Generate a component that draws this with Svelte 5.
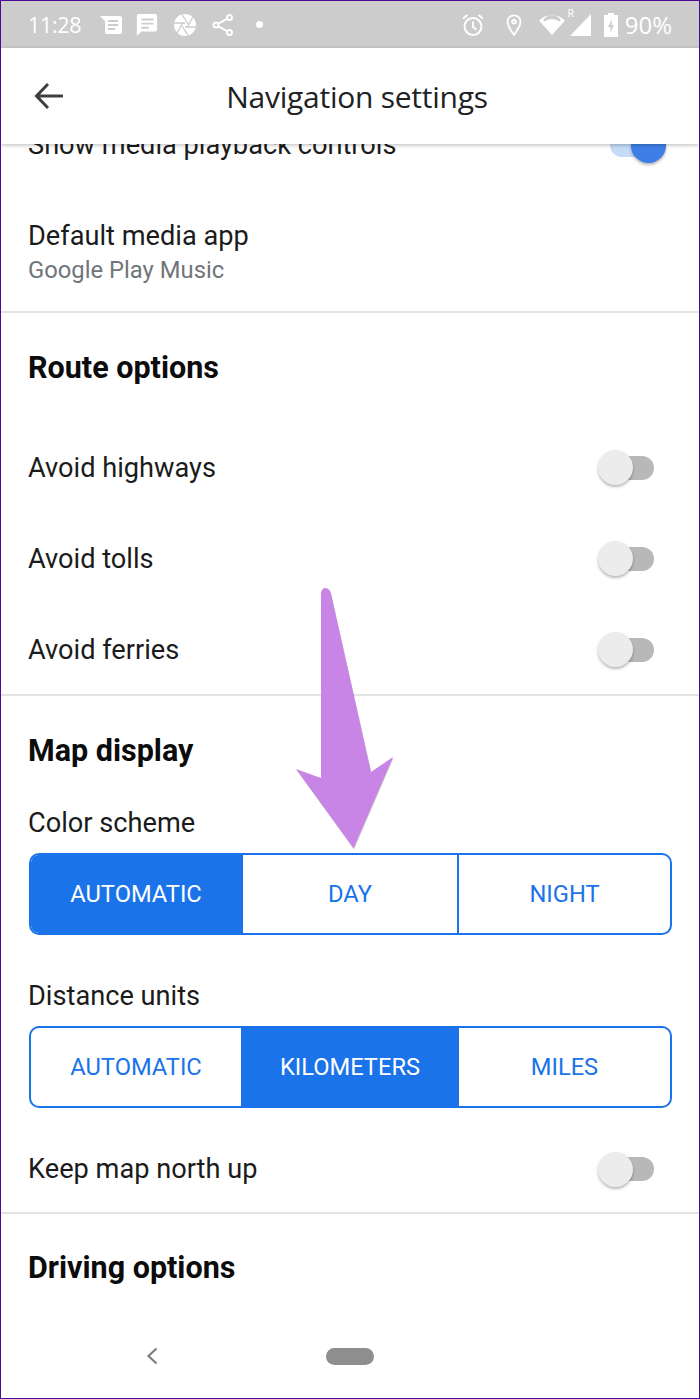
<script>
  const colorOptions = [
    { label: 'AUTOMATIC', on: true },
    { label: 'DAY', on: false },
    { label: 'NIGHT', on: false }
  ];
  const unitOptions = [
    { label: 'AUTOMATIC', on: false },
    { label: 'KILOMETERS', on: true },
    { label: 'MILES', on: false }
  ];
</script>

<div class="phone">
  <div class="status">
    <div class="status-left">
      <span class="time">11:28</span>
      <svg class="i" style="margin-left:20px" width="22" height="18" viewBox="0 0 22 18"><path fill="#fff" fill-rule="evenodd" d="M0 0h20a2 2 0 0 1 2 2v14a2 2 0 0 1-2 2H7a2 2 0 0 1-2-2V5zM8 4v2h10V4zm0 4v2h10V8zm0 4v2h7v-2z"/></svg>
      <svg class="i" style="margin-left:13px" width="24" height="24" viewBox="0 0 24 26"><path fill="#fff" fill-rule="evenodd" d="M3 1h18a2 2 0 0 1 2 2v15a2 2 0 0 1-2 2H6l-5 5V3a2 2 0 0 1 2-2zm3 5v2h13V6zm0 4.500v2h13v-2zm0 4.500v2h8v-2z"/></svg>
      <svg class="i" style="margin-left:14px" width="24" height="24" viewBox="0 0 24 24"><circle cx="12" cy="12" r="11" fill="#fff"/><path stroke="#ccc" stroke-width="1.300" fill="none" d="M9 1.500 15 11M20 4 14 14.500M23 14H12M15 22.500 9 13M4 20 10 9.500M1 10h11"/></svg>
      <svg class="i" style="margin-left:15px" width="22" height="24" viewBox="0 0 22 24" fill="none" stroke="#fff" stroke-width="2"><circle cx="17.500" cy="4.500" r="2.500"/><circle cx="4" cy="12" r="2.500"/><circle cx="17.500" cy="19.500" r="2.500"/><path d="M6 10.800 15.500 5.700M6 13.200l9.500 5.100"/></svg>
      <span class="dot"></span>
    </div>
    <div class="status-right">
      <svg class="i" width="24" height="24" viewBox="0 0 24 24" fill="none" stroke="#fff" stroke-width="2"><circle cx="12" cy="13.500" r="8.500"/><path d="M12 8.500v5.500l3.500 2.500M2 5.500 6.500 2M22 5.500 17.500 2"/></svg>
      <svg class="i" style="margin-left:19px" width="20" height="24" viewBox="0 0 20 26" fill="none" stroke="#fff" stroke-width="2"><path d="M10 23.500C6 18 3 14.500 3 9.500a7 7 0 0 1 14 0c0 5-3 8.500-7 14z"/><circle cx="10" cy="9.500" r="2"/></svg>
      <svg class="i" style="margin-left:15px" width="26" height="22" viewBox="0 0 26 22"><path fill="#fff" fill-rule="evenodd" d="M0 6.500C7-.5 19-.5 26 6.500L13 21zM5.500 7.500C10 4 16 4 20.500 7.500l1.500-1.500C16-.8 10-.3 4 6z"/></svg>
      <span class="roam">R</span>
      <svg class="i sig" width="22" height="24" viewBox="0 0 22 24"><path fill="#fff" d="M21 1v22H0z"/></svg>
      <svg class="i" style="margin-left:12px" width="14" height="24" viewBox="0 0 14 24"><path fill="#fff" fill-rule="evenodd" d="M4 0h6v2h4v22H0V2h4zM8 6 4 14h2.500L6 20l4-8H7.500z"/></svg>
      <span class="pct">90%</span>
    </div>
  </div>

  <header class="head">
    <svg class="back" width="30" height="28" viewBox="0 0 30 28" fill="none" stroke="#3c4043" stroke-width="3"><path d="M29 14H3M14 2 2.500 14 14 26"/></svg>
    <h1>Navigation settings</h1>
  </header>

  <main class="list">
    <div class="row clipped">
      <span class="label">Show media playback controls</span>
      <span class="toggle on"></span>
    </div>

    <div class="media">
      <div class="label">Default media app</div>
      <div class="sub">Google Play Music</div>
    </div>

    <section class="group route">
      <h2>Route options</h2>
      <div class="row spaced"><span class="label">Avoid highways</span><span class="toggle"></span></div>
      <div class="row spaced"><span class="label">Avoid tolls</span><span class="toggle"></span></div>
      <div class="row spaced"><span class="label">Avoid ferries</span><span class="toggle"></span></div>
    </section>

    <section class="group display">
      <h2>Map display</h2>
      <div class="label cap first">Color scheme</div>
      <div class="seg">
        {#each colorOptions as o}
          <div class="opt" class:on={o.on}>{o.label}</div>
        {/each}
      </div>
      <div class="label cap second">Distance units</div>
      <div class="seg">
        {#each unitOptions as o}
          <div class="opt" class:on={o.on}>{o.label}</div>
        {/each}
      </div>
      <div class="row north"><span class="label">Keep map north up</span><span class="toggle"></span></div>
    </section>

    <section class="group driving">
      <h2>Driving options</h2>
    </section>
  </main>

  <nav class="nav">
    <svg width="14" height="18" viewBox="0 0 14 18" fill="none" stroke="#7f7f7f" stroke-width="2.200"><path d="M11.500 1.500 3.500 9l8 7.500"/></svg>
    <span class="pill"></span>
  </nav>

  <svg class="arrow" width="110" height="270" viewBox="290 585 110 270">
    <path fill="#8a7a8c" opacity=".45" d="M321.500 594Q322.500 589 325.500 589Q330.500 589 331.500 595L371.500 773 393.500 758 354 849.500 296.500 770 321.500 779Z"/>
    <path fill="#c985e5" d="M321 593Q322 588 325 588Q330 588 331 594L371 772 393 757 353.500 848 296 769 321 778Z"/>
  </svg>
</div>

<style>
  :global(body) { margin: 0; background: #fff; }

  .phone {
    position: relative;
    box-sizing: border-box;
    width: 700px;
    height: 1399px;
    border: 1px solid #4b0a96;
    background: #fff;
    display: flex;
    flex-direction: column;
    overflow: hidden;
    font-family: Roboto, "Liberation Sans", sans-serif;
    color: #111;
  }

  .status {
    flex: 0 0 47px;
    background: #ccc;
    display: flex;
    align-items: center;
    justify-content: space-between;
    padding: 0 27px 0 27px;
    color: #fff;
  }
  .status-left, .status-right { display: flex; align-items: center; }
  .i { display: block; flex: none; }
  .time { font: 400 21.500px "Open Sans", sans-serif; letter-spacing: -0.3px; width: 52px; }
  .dot { width: 7px; height: 7px; border-radius: 50%; background: #fff; margin-left: 22px; }
  .roam { font: 400 10px Roboto, sans-serif; align-self: flex-start; margin: 0 0 0 3px; width: 5px; }
  .sig { margin-left: -3px; }
  .pct { font: 400 24px "Open Sans", sans-serif; margin-left: 7px; }

  .head {
    flex: 0 0 96px;
    position: relative;
    z-index: 2;
    display: flex;
    align-items: center;
    justify-content: center;
    background: #fff;
    box-shadow: 0 1px 4px rgba(0, 0, 0, 0.28);
  }
  .back { position: absolute; left: 33px; top: 34px; }
  h1 {
    margin: 0;
    font: 400 30px "Open Sans", sans-serif;
    letter-spacing: -0.25px;
    color: #202124;
    transform: translateX(7px);
  }

  .list { flex: 1; min-height: 0; overflow: hidden; margin-top: -32px; padding: 0; }

  .row {
    display: flex;
    align-items: center;
    justify-content: space-between;
    padding: 0 45px 0 27px;
  }
  .clipped { height: 66px; }
  .label { font-size: 27.200px; line-height: 32px; color: #1b1b1b; }

  .media { padding: 42px 27px 26px; border-bottom: 2px solid #e4e4e4; }
  .sub { font-size: 23.800px; line-height: 30px; color: #70757a; margin-top: 3px; }

  h2 { margin: 0; font-size: 30.500px; line-height: 36px; font-weight: 700; color: #0c0c0c; padding: 0 27px; }

  .group { border-bottom: 2px solid #e4e4e4; }
  .route { padding-top: 37px; height: 383px; box-sizing: border-box; }
  .route .spaced { height: 91px; }
  .route h2 { margin-bottom: 36px; }

  .display { padding-top: 37px; height: 518px; box-sizing: border-box; }
  .cap { padding: 0 27px; }
  .first { margin-top: 38px; }
  .second { margin-top: 45px; }
  .north { margin-top: 45px; height: 32px; }

  .seg {
    margin: 14px 27px 0 28px;
    display: grid;
    grid-template-columns: 210px 216px 1fr;
    height: 82px;
    box-sizing: border-box;
    border: 2px solid #1a73e8;
    border-radius: 10px;
    overflow: hidden;
  }
  .opt {
    display: flex;
    align-items: center;
    justify-content: center;
    font-size: 23.700px;
    color: #1a73e8;
  }
  .opt.on { background: #1a73e8; color: #fff; }
  .opt + .opt { border-left: 2px solid #1a73e8; }

  .driving { border: 0; padding-top: 36px; }

  .toggle {
    position: relative;
    display: block;
    width: 52px;
    height: 24px;
    border-radius: 12px;
    background: #b8b8b8;
    flex: none;
  }
  .toggle::after {
    content: "";
    position: absolute;
    left: -4px;
    top: -5.500px;
    width: 35px;
    height: 35px;
    border-radius: 50%;
    background: #ececec;
    box-shadow: 0 2px 3px rgba(0, 0, 0, 0.28);
  }
  .toggle.on { background: #c4dcf8; width: 44px; }
  .toggle.on::after { left: auto; right: -12px; background: #3d7fe6; }

  .nav {
    position: absolute;
    left: 0;
    right: 0;
    bottom: 0;
    height: 84px;
    background: #fff;
    display: flex;
    align-items: center;
    padding-left: 144px;
    z-index: 1;
  }
  .pill { width: 48px; height: 17px; border-radius: 9px; background: #8e8e8e; margin-left: 167px; }

  .arrow { position: absolute; left: 289px; top: 584px; z-index: 3; }
</style>
